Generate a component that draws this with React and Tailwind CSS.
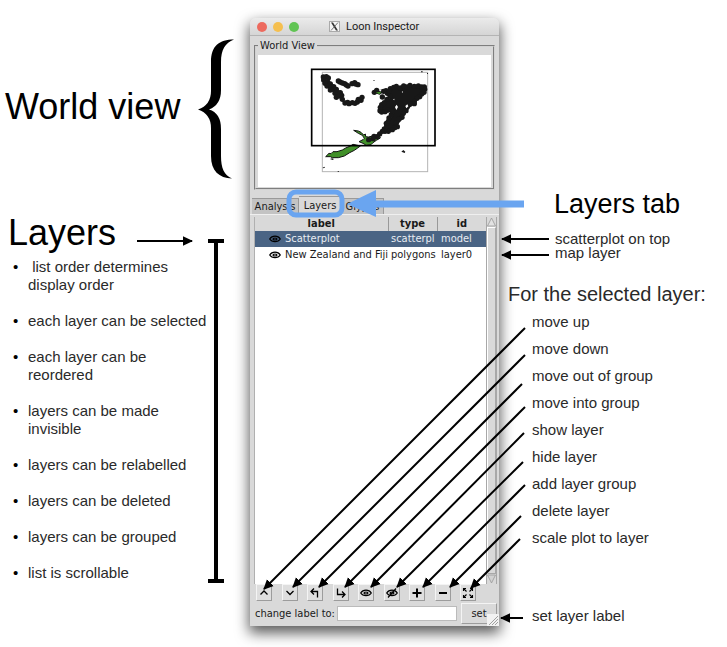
import React from "react";

const features = [
  "\u00a0list order determines display order",
  "each layer can be selected",
  "each layer can be reordered",
  "layers can be made invisible",
  "layers can be relabelled",
  "layers can be deleted",
  "layers can be grouped",
  "list is scrollable",
];

const actions = [
  "move up",
  "move down",
  "move out of group",
  "move into group",
  "show layer",
  "hide layer",
  "add layer group",
  "delete layer",
  "scale plot to layer",
];

const pointers = [
  [525, 328, 264, 589],
  [525, 355, 293, 587],
  [522, 384, 319, 587],
  [525, 407, 345, 587],
  [524, 433, 371, 587],
  [523, 462, 397, 587],
  [525, 485, 423, 587],
  [521, 516, 450, 587],
  [520, 539, 471, 588],
  [137, 241, 192, 241],
  [549, 239, 502, 239],
  [549, 255, 502, 255],
  [523, 618, 501, 618],
];

const dots = [
  [55, 51], [64, 50], [70, 54], [56, 60], [68, 66], [60, 70], [76, 72], [66, 78], [78, 82], [86, 80],
  [76, 90], [88, 90], [94, 88], [90, 100], [100, 98], [106, 98], [94, 112], [104, 108], [110, 106],
  [112, 118], [120, 129], [128, 127], [132, 131], [142, 128], [150, 130], [157, 126], [160, 118], [168, 121], [171, 112],
  [100, 63], [105, 66], [112, 69], [119, 71], [124, 75], [129, 78], [141, 71], [149, 68], [152, 72], [159, 74],
  [208, 97], [215, 91], [232, 111], [236, 94], [243, 92],
  [256, 86], [266, 82], [274, 79], [286, 84], [296, 78], [306, 81], [315, 76], [328, 79], [340, 78], [350, 81], [358, 81],
  [359, 88], [357, 97], [350, 102], [344, 110], [336, 115], [328, 124], [328, 131], [316, 132], [306, 142], [303, 152],
  [295, 160], [291, 172], [282, 177], [274, 188], [277, 200], [269, 203], [262, 209], [250, 214], [240, 214], [238, 207],
  [245, 198], [244, 190], [250, 184], [252, 174], [259, 164], [262, 154], [248, 150], [240, 155], [230, 156], [225, 152],
  [226, 142], [230, 134], [238, 128], [246, 118], [255, 108], [247, 100], [253, 94],
  [232, 214], [224, 222], [216, 230], [207, 229], [204, 236], [191, 239],
];

function WorldMap() {
  return (
    <svg className="block h-[132px] w-full bg-white" viewBox="-141 -15 699 396" aria-label="World view map">
      <rect x="52" y="37" width="316" height="298" fill="none" stroke="#b4b4b4" strokeWidth="3" />
      <g fill="#419029" stroke="#111" strokeWidth="3" strokeLinejoin="round">
        <path d="M62 290L72 280 78 281 84 275 96 275 112 270 122 264 136 258 144 253 158 256 166 258 158 264 148 271 134 278 118 288 100 293 82 293 76 290z" />
        <path d="M146 211L160 213 168 217 176 225 181 222 182 230 190 231 204 228 222 226 226 234 214 241 204 248 198 254 184 256 174 250 162 245 174 239 178 235 172 226 160 220z" />
        <path d="M210 98l10-4 12 3-8 6z" />
      </g>
      <g fill="#181818">
        <path d="M252 86l40-8 60 2 8 14-26 28-26 28-16 28-24 28-26 8 12-34 14-26-22 4-22-4 8-20 22-20z" />
        {dots.map(([x, y], i) => (
          <circle key={i} cx={x} cy={y} r="8" />
        ))}
        <path d="M289 275l6-5 6 5-2 4zM53 323l5-3 2 3-6 2zM75 297l6-2 6 2-4 3zM205 61h4v2h-4zM98 333h4v2h-4zM224 90l12-3 4 4zM348 34h5v3h-5zM366 39h3v3h-3z" />
      </g>
      <path d="M212 98l8-2 8 2-6 3z" fill="#419029" />
      <path d="M270 141l5-7 4 7-5 9zM301 138l6-5 3 6-6 6zM264 118l4-2v5zM290 96l4-2v4z" fill="#fff" />
      <rect x="20" y="28" width="370" height="229" fill="none" stroke="#000" strokeWidth="5" />
    </svg>
  );
}

function Eye({ slashed = false }) {
  return (
    <svg className="h-3 w-3 shrink-0" viewBox="0 0 12 12" fill="none" stroke="currentColor" strokeWidth="1.2">
      <path d="M.7 6C3 2.2 9 2.2 11.3 6 9 9.6 3 9.6.7 6z" />
      <ellipse cx="6" cy="6" rx="2" ry="1" />
      {slashed && <path d="M2 10.5L10 1.5" />}
    </svg>
  );
}

const glyph = {
  up: <path d="M2.5 7.5L6 4l3.5 3.5" />,
  down: <path d="M2.5 4L6 7.5 9.5 4" />,
  out: <path d="M5 1.5L2 4.5l3 3M2 4.5h6.5v6" />,
  into: <path d="M2.5 1.5v6h7M7 4.5l3 3-3 3" />,
  plus: <path d="M6 1.5v9M1.5 6h9" strokeWidth="2" />,
  minus: <path d="M2 6h8" strokeWidth="2" />,
  scale: (
    <path
      d="M1.5 4V1.5H4M1.5 1.5l3 3M8 1.5h2.5V4M10.5 1.5l-3 3M1.5 8v2.5H4M1.5 10.5l3-3M10.5 8v2.5H8M10.5 10.5l-3-3"
      strokeWidth="1.1"
    />
  ),
};

function Glyph({ name }) {
  return (
    <svg className="h-3 w-3" viewBox="0 0 12 12" fill="none" stroke="currentColor" strokeWidth="1.3">
      {glyph[name]}
    </svg>
  );
}

const tools = [
  ["up", "Move up"],
  ["down", "Move down"],
  ["out", "Move out of group"],
  ["into", "Move into group"],
  ["show", "Show layer"],
  ["hide", "Hide layer"],
  ["plus", "Add layer group"],
  ["minus", "Delete layer"],
  ["scale", "Scale plot to layer"],
];

const layers = [
  { label: "Scatterplot", type: "scatterpl", id: "model", row: "bg-[#4a6484] text-[#e8ecf2]" },
  { label: "New Zealand and Fiji", type: "polygons", id: "layer0", row: "bg-white" },
];

function InspectorWindow() {
  return (
    <section className="mt-[18px] flex flex-col rounded-t-[5px] bg-[#d9d9d9] pb-[2px] font-['DejaVu_Sans_Condensed','DejaVu_Sans',sans-serif] text-[11px] leading-[14px] text-[#1a1a1a] shadow-[0_6px_14px_1px_rgba(0,0,0,0.65)]">
      <header className="flex h-[18px] items-center rounded-t-[5px] border-b border-[#b4b4b4] bg-gradient-to-b from-[#ebebeb] to-[#d5d5d5] pl-[7px]">
        <div className="flex gap-[6px]">
          <span className="h-[10px] w-[10px] rounded-full bg-[#ed6a5e]" />
          <span className="h-[10px] w-[10px] rounded-full bg-[#f5bf4f]" />
          <span className="h-[10px] w-[10px] rounded-full bg-[#61c454]" />
        </div>
        <svg className="ml-[30px] h-[11px] w-[11px]" viewBox="0 0 11 11">
          <rect x=".5" y=".5" width="10" height="10" fill="#f5f5f5" stroke="#aaa" />
          <path d="M2 1.5h2l5 8H7z" fill="#333" />
          <path d="M9 1.5l-7 8" stroke="#555" strokeWidth=".8" />
        </svg>
        <h2 className="ml-[6px] font-[Roboto,sans-serif] text-[11px]">Loon Inspector</h2>
      </header>

      <fieldset className="mx-1 mt-[3px] min-w-0 border-2 border-[#d2d2d2] px-[2px] pt-[2px] pb-px [border-style:groove]">
        <legend className="px-[2px]">World View</legend>
        <WorldMap />
      </fieldset>

      <div role="tablist" className="mt-[6px] flex h-[18px] items-end pl-[2px]">
        <button role="tab" className="h-4 w-[47px] border-t border-r border-[#9a9a9a] bg-[#c3c3c3]">Analysis</button>
        <button role="tab" aria-selected="true" className="h-[18px] w-[43px] border-t border-r border-[#9a9a9a] bg-[#d9d9d9]">Layers</button>
        <button role="tab" className="h-4 w-[42px] border-t border-r border-[#9a9a9a] bg-[#c3c3c3]">Glyphs</button>
      </div>

      <div className="flex flex-col border-t border-[#efefef] pt-[2px]">
        <div className="mr-[2px] ml-1 flex min-h-[367px]">
          <div className="min-w-0 flex-1 border-l border-[#b0b0b0] bg-white">
            <table className="w-full table-fixed border-collapse">
              <colgroup>
                <col />
                <col className="w-[49px]" />
                <col className="w-[49px]" />
              </colgroup>
              <thead>
                <tr className="h-[14px] bg-[#d9d9d9]">
                  <th className="border-r border-[#999] p-0 font-bold">label</th>
                  <th className="border-r border-[#999] p-0 font-bold">type</th>
                  <th className="p-0 font-bold">id</th>
                </tr>
              </thead>
              <tbody>
                {layers.map((layer) => (
                  <tr key={layer.id} className={`h-4 ${layer.row}`}>
                    <td className="p-0 whitespace-nowrap">
                      <span className="flex items-center gap-1 pl-[14px]">
                        <span className="flex text-black"><Eye /></span>
                        {layer.label}
                      </span>
                    </td>
                    <td className="p-0 pl-[3px] whitespace-nowrap">{layer.type}</td>
                    <td className="p-0 pl-1">{layer.id}</td>
                  </tr>
                ))}
              </tbody>
            </table>
          </div>
          <div className="flex w-[11px] flex-col border-x border-[#a8a8a8] bg-[#d9d9d9]">
            <svg className="h-[10px] w-full" viewBox="0 0 9 10"><path d="M4.5 1L.5 9h8z" fill="#e2e2e2" stroke="#999" strokeWidth=".8" /></svg>
            <div className="flex-1 border border-[#a8a8a8] border-t-white border-l-white" />
            <svg className="h-[10px] w-full" viewBox="0 0 9 10"><path d="M4.5 9L.5 1h8z" fill="#d2d2d2" stroke="#999" strokeWidth=".8" /></svg>
          </div>
        </div>

        <div className="mr-[23px] ml-[6px] flex justify-between">
          {tools.map(([name, label]) => (
            <button
              key={name}
              aria-label={label}
              className="flex h-[17px] w-4 items-center justify-center border border-[#9c9c9c] border-t-[#f4f4f4] border-l-[#f4f4f4] bg-[#dedede] text-black"
            >
              {name === "show" || name === "hide" ? <Eye slashed={name === "hide"} /> : <Glyph name={name} />}
            </button>
          ))}
        </div>

        <form className="relative mt-[2px] flex h-[21px] items-center pr-[2px] pl-[5px]" onSubmit={(e) => e.preventDefault()}>
          <label htmlFor="layer-label" className="whitespace-nowrap">change label to:</label>
          <input id="layer-label" className="ml-[2px] h-[15px] min-w-0 flex-1 border border-[#bbb] bg-white px-1" />
          <button className="ml-1 h-[21px] w-[36px] border border-[#9c9c9c] border-t-[#f4f4f4] border-l-[#f4f4f4] bg-[#d9d9d9]">set</button>
          <svg className="absolute right-0 -bottom-[2px] h-3 w-3 bg-[#f2f2f2]" viewBox="0 0 12 12" stroke="#a0a0a0" strokeWidth="1">
            <path d="M2 11l9-9M5 11l6-6M8 11l3-3" />
          </svg>
        </form>
      </div>
    </section>
  );
}

function Annotations() {
  return (
    <svg className="pointer-events-none absolute top-0 left-0 h-[647px] w-[727px]" viewBox="0 0 727 647" aria-hidden="true">
      <defs>
        <marker id="head" markerUnits="userSpaceOnUse" markerWidth="11" markerHeight="10" refX="9" refY="5" orient="auto">
          <path d="M0 .2l10 4.8L0 9.8z" />
        </marker>
      </defs>
      <rect x="289" y="192" width="53" height="23" rx="7" fill="none" stroke="#6aa5f0" strokeWidth="5" />
      <path d="M347 204l29-14v10.5h148v7H376V217z" fill="#6aa5f0" />
      <g stroke="#000" strokeWidth="2">
        {pointers.map(([x1, y1, x2, y2], i) => (
          <line key={i} x1={x1} y1={y1} x2={x2} y2={y2} markerEnd="url(#head)" />
        ))}
      </g>
      <path d="M208 239h16v4h-6v336h6v4h-16v-4h6V243h-6z" />
    </svg>
  );
}

export default function App() {
  return (
    <main className="relative grid min-h-screen grid-cols-[250px_249px_minmax(228px,1fr)] items-start bg-white font-['Liberation_Sans',Arial,sans-serif] text-[15px] text-[#2a2a2a]">
      <div className="pt-[38px]">
        <div className="flex h-[142px] items-center justify-between pr-4 pl-[5px] text-black">
          <h1 className="pb-1 text-[36px] leading-[40px] whitespace-nowrap">World view</h1>
          <svg className="h-[141px] w-9" viewBox="0 0 36 141">
            <path d="M36 .5C21 .5 13 7 13 23V52Q13 66 0 70.5Q13 75 13 89V117C13 132 21 139 34 139.5C26 136 23 129 23 117V90Q23 74 11 70.5Q23 66 23 51V23C23 11 27 4 36 .5z" />
          </svg>
        </div>
        <h2 className="mt-[33px] pl-2 text-[36px] leading-[40px] text-black">Layers</h2>
        <ul className="mt-[5px] flex list-none flex-col gap-[18px] pr-[36px] pl-[28px] leading-[18px]">
          {features.map((text) => (
            <li key={text} className="relative before:absolute before:-left-[15px] before:text-black before:content-['•']">{text}</li>
          ))}
        </ul>
      </div>

      <InspectorWindow />

      <div className="pt-[188px] pl-[9px]">
        <h2 className="pl-[46px] text-[27px] leading-[32px] text-black">Layers tab</h2>
        <div className="mt-[12px] pl-[47px] leading-[14px]">
          <p>scatterplot on top</p>
          <p>map layer</p>
        </div>
        <h3 className="mt-[22px] text-[20px] leading-[24px] whitespace-nowrap">For the selected layer:</h3>
        <ul className="mt-[2px] pl-[24px] leading-[27px]">
          {actions.map((text) => (
            <li key={text}>{text}</li>
          ))}
        </ul>
        <p className="mt-[51px] pl-[24px] leading-[27px]">set layer label</p>
      </div>

      <Annotations />
    </main>
  );
}
